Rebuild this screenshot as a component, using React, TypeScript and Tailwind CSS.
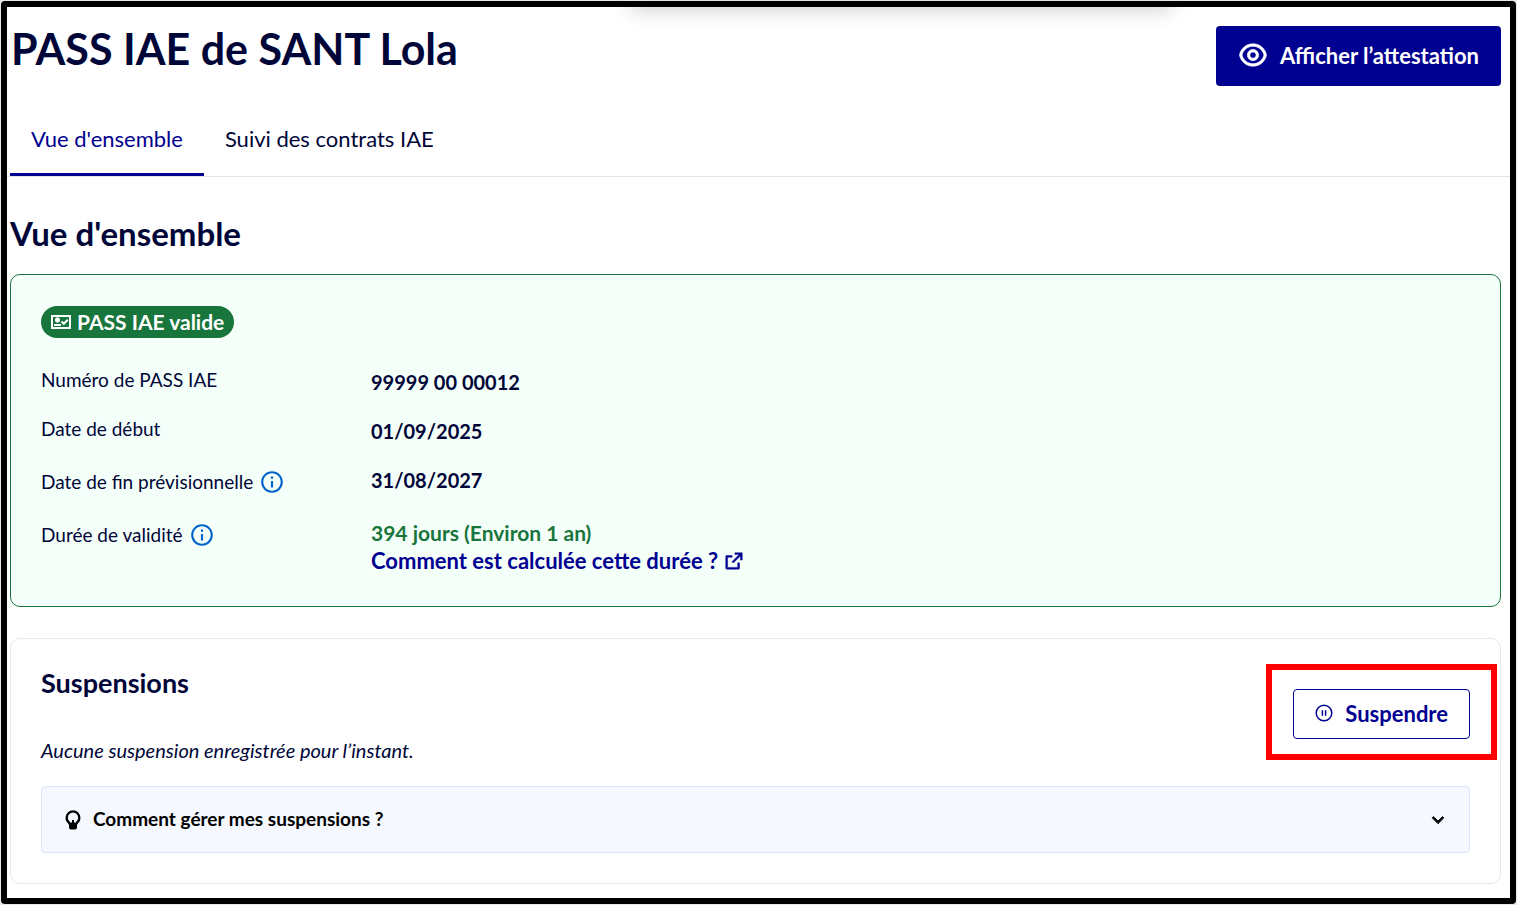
import { useState } from 'react'
import type { ReactNode } from 'react'
import clsx from 'clsx'
import { RiArrowDownSLine, RiExternalLinkLine, RiEyeLine, RiInformationLine } from 'react-icons/ri'

const tabs = ["Vue d'ensemble", 'Suivi des contrats IAE']

function PassIcon() {
  return (
    <svg viewBox="0 0 20 16" className="h-4 w-5 shrink-0" fill="none" stroke="currentColor" aria-hidden="true">
      <path d="M1 2h18v12H1z" strokeWidth="2" />
      <circle cx="6.5" cy="6" r="2.2" fill="currentColor" strokeWidth="1" />
      <path d="M3 11h7" strokeWidth="2" />
      <path d="m10.5 7.5 2.3 2.3 4-4" strokeWidth="2" />
    </svg>
  )
}

function PauseIcon() {
  return (
    <svg viewBox="0 0 18 18" className="size-[18px] shrink-0" fill="none" stroke="currentColor" aria-hidden="true">
      <circle cx="9" cy="9" r="7.8" strokeWidth="1.5" />
      <path d="M7.4 6.3v5.400M10.6 6.300v5.400" strokeWidth="1.5" />
    </svg>
  )
}

function BulbIcon() {
  return (
    <svg viewBox="0 0 16 20" className="h-5 w-4 shrink-0" fill="none" aria-hidden="true">
      <path d="M4.500 13C2.600 11.800 1.700 10 1.700 7.700a6.300 6.300 0 0 1 12.600 0c0 2.300-.9 4.100-2.800 5.300" stroke="currentColor" strokeWidth="2.300" />
      <path d="M3 12.500h4V10h2v2.500h4l-1 2.500v2.500a2 2 0 0 1-2 2H6a2 2 0 0 1-2-2V15z" fill="currentColor" />
    </svg>
  )
}

function InfoButton({ label }: { label: string }) {
  return (
    <button type="button" aria-label={label} className="text-[#0063cb]">
      <RiInformationLine className="size-[26px]" />
    </button>
  )
}

interface RowProps { label: string; info?: boolean; children: ReactNode }

function Row({ label, info, children }: RowProps) {
  return (
    <div className="flex items-start">
      <dt className={clsx('flex w-[330px] shrink-0 items-center gap-[6px] text-[19px]', info ? 'h-8' : 'h-6')}>
        {label}
        {info && <InfoButton label={`Informations : ${label}`} />}
      </dt>
      <dd className="text-[20px] leading-7 font-bold">{children}</dd>
    </div>
  )
}

export default function App() {
  const [active, setActive] = useState(0)
  const [open, setOpen] = useState(false)

  return (
    <div className="min-h-screen bg-[#e3e9e3] p-px font-['Lato','Open_Sans',sans-serif] text-[#000638]">
      <div className="relative min-h-[calc(100vh-2px)] overflow-hidden rounded-sm border-6 border-black bg-white pb-[13px]">
        {/* shadow of the bar sitting above the page */}
        <div className="absolute -top-4 left-[41.500%] h-4 w-[36%] shadow-[0_2px_20px_rgba(0,0,0,0.22)]" />

        <header className="flex items-start justify-between pt-[19px] pr-[9px] pl-1">
          <h1 className="text-[43px] leading-[46px] font-bold">PASS IAE de SANT Lola</h1>
          <button type="button" className="flex h-[60px] items-center gap-3 rounded-[4px] bg-[#000091] px-[22px] pb-[2px] text-[22px] font-bold text-white">
            <RiEyeLine className="size-[30px] stroke-[0.5]" />
            Afficher l’attestation
          </button>
        </header>

        <nav className="mt-[18px] border-b border-[#e3e3ea] pl-[3px]">
          <div role="tablist" className="flex">
            {tabs.map((tab, i) => (
              <button key={tab} type="button" role="tab" aria-selected={i === active} onClick={() => setActive(i)}
                className={clsx('h-[72px] border-b-3 px-[21px] text-[22px]',
                  i === active ? 'border-[#000091] text-[#000091]' : 'border-transparent')}>
                {tab}
              </button>
            ))}
          </div>
        </nav>

        <main className="pr-[9px] pl-[3px]">
          <h2 className="pt-9 text-[33px] leading-10 font-bold">Vue d'ensemble</h2>

          <section className="mt-[21px] rounded-[10px] border border-[#18753c] bg-[#f5fffa] px-[30px] pt-[31px] pb-[31px]">
            <span className="inline-flex h-8 items-center gap-[6px] rounded-full bg-[#18753c] px-[10px] text-[21px] font-bold text-white">
              <PassIcon />
              PASS IAE valide
            </span>
            <dl className="mt-[30px] flex flex-col gap-[21px]">
              <Row label="Numéro de PASS IAE">99999 00 00012</Row>
              <Row label="Date de début">01/09/2025</Row>
              <Row label="Date de fin prévisionnelle" info>31/08/2027</Row>
              <Row label="Durée de validité" info>
                <p className="text-[21px] text-[#18753c]">394 jours (Environ 1 an)</p>
                <a href="#duree" className="flex items-center gap-[5px] text-[22px] text-[#000091]">
                  Comment est calculée cette durée ?
                  <RiExternalLinkLine className="size-[22px] stroke-[0.5]" />
                </a>
              </Row>
            </dl>
          </section>

          <section className="mt-[31px] rounded-[10px] border border-[#e8e8ec] px-[30px] pt-[25px] pb-[30px]">
            <div className="flex items-start justify-between">
              <div>
                <h3 className="text-[27px] leading-[38px] font-bold">Suspensions</h3>
                <p className="mt-9 text-[20px] leading-6 italic">Aucune suspension enregistrée pour l’instant.</p>
              </div>
              <div className="-mr-[27px] border-6 border-[#ff0000] px-[21px] pt-[19px] pb-[15px]">
                <button type="button" className="flex h-[50px] items-center gap-3 rounded-[4px] border border-[#000091] px-[21px] pb-[2px] text-[22px] font-bold text-[#000091]">
                  <PauseIcon />
                  Suspendre
                </button>
              </div>
            </div>
            <div className="mt-6 rounded-[4px] border border-[#dde4fb] bg-[#f5f8ff] text-black">
              <button type="button" aria-expanded={open} onClick={() => setOpen(!open)}
                className="flex h-[65px] w-full items-center gap-3 px-[23px] text-[19px] font-bold">
                <BulbIcon />
                Comment gérer mes suspensions ?
                <RiArrowDownSLine className={clsx('-mr-[3px] ml-auto size-[22px] stroke-1', open && 'rotate-180')} />
              </button>
            </div>
          </section>
        </main>
      </div>
    </div>
  )
}
